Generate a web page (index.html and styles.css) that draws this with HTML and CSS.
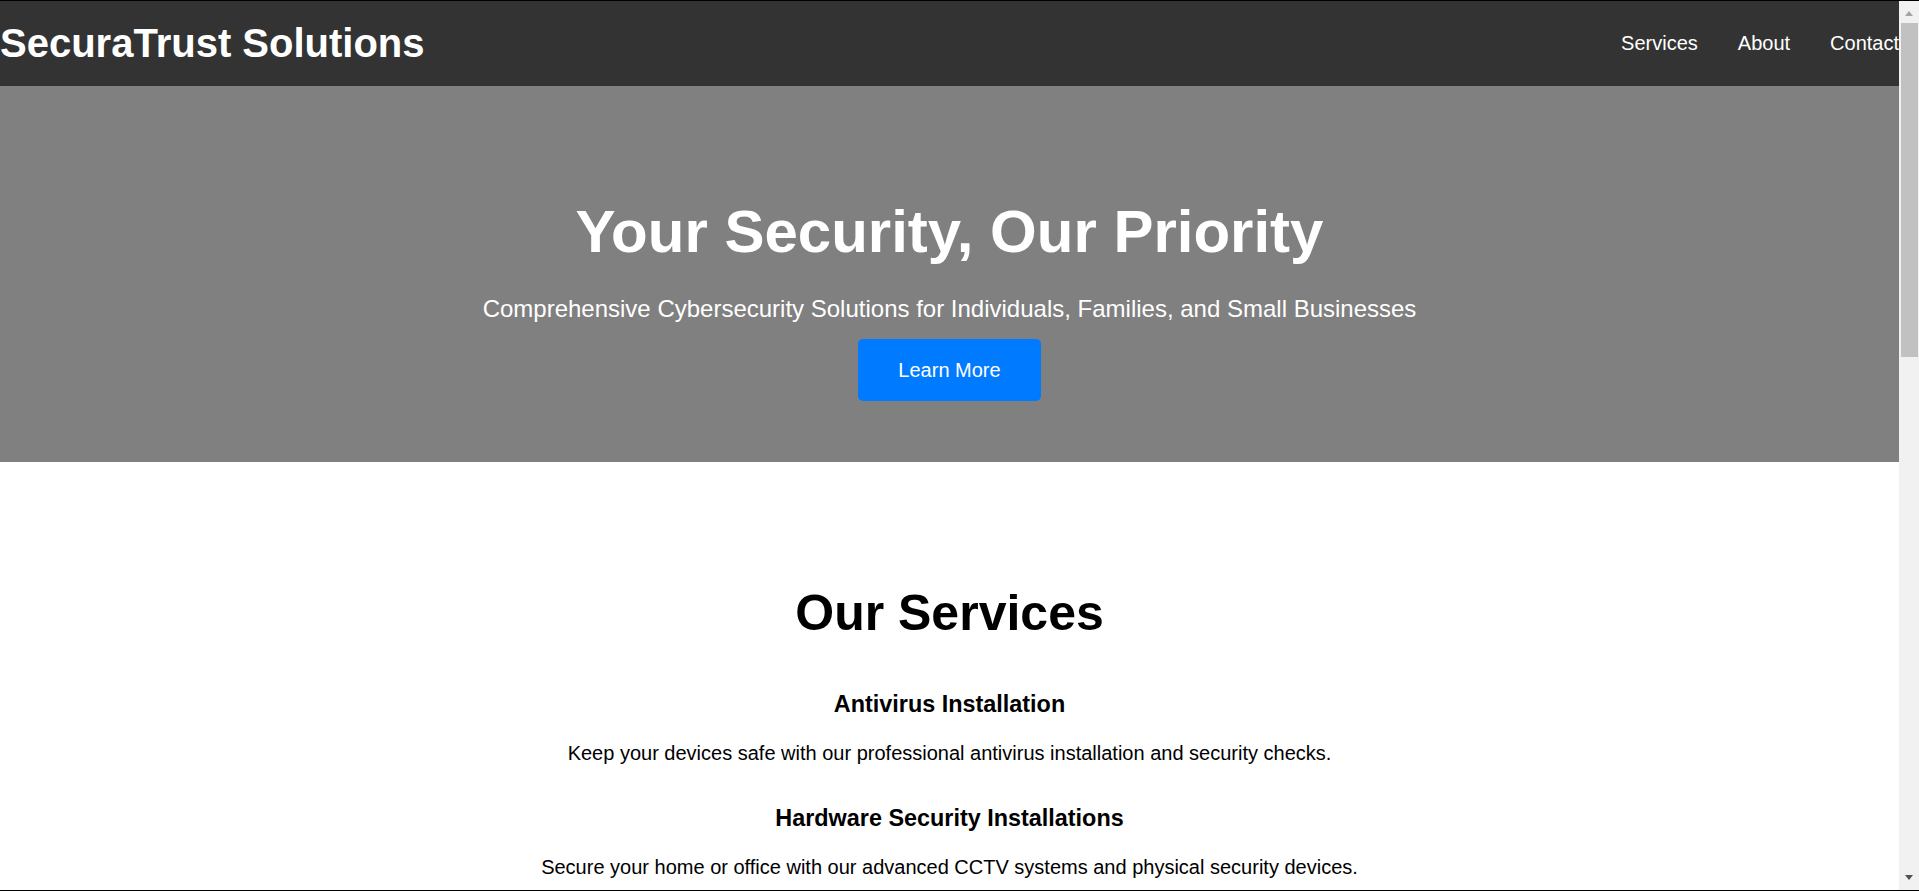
FILE: index.html
```html
<!DOCTYPE html>
<html lang="en">
<head>
<meta charset="utf-8">
<title>SecuraTrust Solutions</title>
<link rel="stylesheet" href="styles.css">
</head>
<body>
<header class="site-header">
  <h1 class="logo">SecuraTrust Solutions</h1>
  <nav class="main-nav">
    <ul class="nav-list">
      <li><a class="nav-link" href="#services">Services</a></li>
      <li><a class="nav-link" href="#about">About</a></li>
      <li><a class="nav-link" href="#contact">Contact</a></li>
    </ul>
  </nav>
</header>

<section class="hero">
  <h2 class="hero-title">Your Security, Our Priority</h2>
  <p class="hero-sub">Comprehensive Cybersecurity Solutions for Individuals, Families, and Small Businesses</p>
  <a class="btn" href="#services">Learn More</a>
</section>

<section class="services" id="services">
  <h2 class="section-title">Our Services</h2>
  <div class="service-list">
    <div class="service">
      <h3 class="service-title">Antivirus Installation</h3>
      <p class="service-text">Keep your devices safe with our professional antivirus installation and security checks.</p>
    </div>
    <div class="service">
      <h3 class="service-title">Hardware Security Installations</h3>
      <p class="service-text">Secure your home or office with our advanced CCTV systems and physical security devices.</p>
    </div>
  </div>
</section>

<div class="scrollbar" aria-hidden="true">
  <span class="sb-arrow sb-up"></span>
  <span class="sb-track"><span class="sb-thumb"></span></span>
  <span class="sb-arrow sb-down"></span>
</div>
<div class="window-frame" aria-hidden="true"></div>
</body>
</html>
```

FILE: styles.css
```css
body {
  margin: 0 20px 0 0;
  padding-top: 1px;
  font-family: "Liberation Sans", Arial, sans-serif;
  font-size: 20px;
  color: #000;
  background: #fff;
}

/* Header */
.site-header {
  display: flex;
  justify-content: space-between;
  align-items: center;
  padding: 20px 0;
  background: #333;
  color: #fff;
}

.logo {
  margin: 0;
  font-size: 40px;
  font-weight: bold;
}

.nav-list {
  display: flex;
  gap: 40px;
  margin: 0;
  padding: 0;
  list-style: none;
}

.nav-link {
  color: #fff;
  text-decoration: none;
  font-size: 20px;
}

/* Hero */
.hero {
  display: flex;
  flex-direction: column;
  align-items: center;
  padding: 111px 20px 61px;
  background: #808080;
  color: #fff;
  text-align: center;
}

.hero-title {
  margin: 0 0 29px;
  font-size: 60px;
  font-weight: bold;
}

.hero-sub {
  margin: 0 0 16px;
  font-size: 24px;
}

.btn {
  display: inline-block;
  padding: 19.5px 40px;
  border-radius: 5px;
  background: #007bff;
  color: #fff;
  font-size: 20px;
  line-height: 23px;
  text-decoration: none;
}

/* Services */
.services {
  padding: 122px 20px 20px;
  text-align: center;
}

.section-title {
  margin: 0 0 49px;
  font-size: 50px;
  font-weight: bold;
}

.service-list {
  display: flex;
  flex-direction: column;
  gap: 40px;
}

.service-title {
  margin: 0 0 24px;
  font-size: 23.4px;
  font-weight: bold;
}

.service-text {
  margin: 0;
  font-size: 20px;
}

/* Browser chrome drawn over the page: scrollbar and window frame */
.scrollbar {
  position: fixed;
  top: 1px;
  right: 0;
  bottom: 1px;
  width: 20px;
  display: flex;
  flex-direction: column;
  background: #f1f1f1;
}

.sb-arrow {
  position: relative;
  height: 20px;
  flex: none;
}

.sb-arrow::before {
  content: "";
  position: absolute;
  left: 6px;
  width: 0;
  height: 0;
  border-left: 4.5px solid transparent;
  border-right: 4.5px solid transparent;
}

.sb-up::before {
  top: 10px;
  border-bottom: 5px solid #a3a3a3;
}

.sb-down::before {
  top: 5px;
  border-top: 5px solid #505050;
}

.sb-track {
  flex: 1;
  padding: 2px 1px 0 2px;
}

.sb-thumb {
  display: block;
  height: 334px;
  background: #c1c1c1;
}

.window-frame {
  position: fixed;
  inset: 0;
  border-top: 1px solid #000;
  border-bottom: 1px solid #000;
  pointer-events: none;
}
```
